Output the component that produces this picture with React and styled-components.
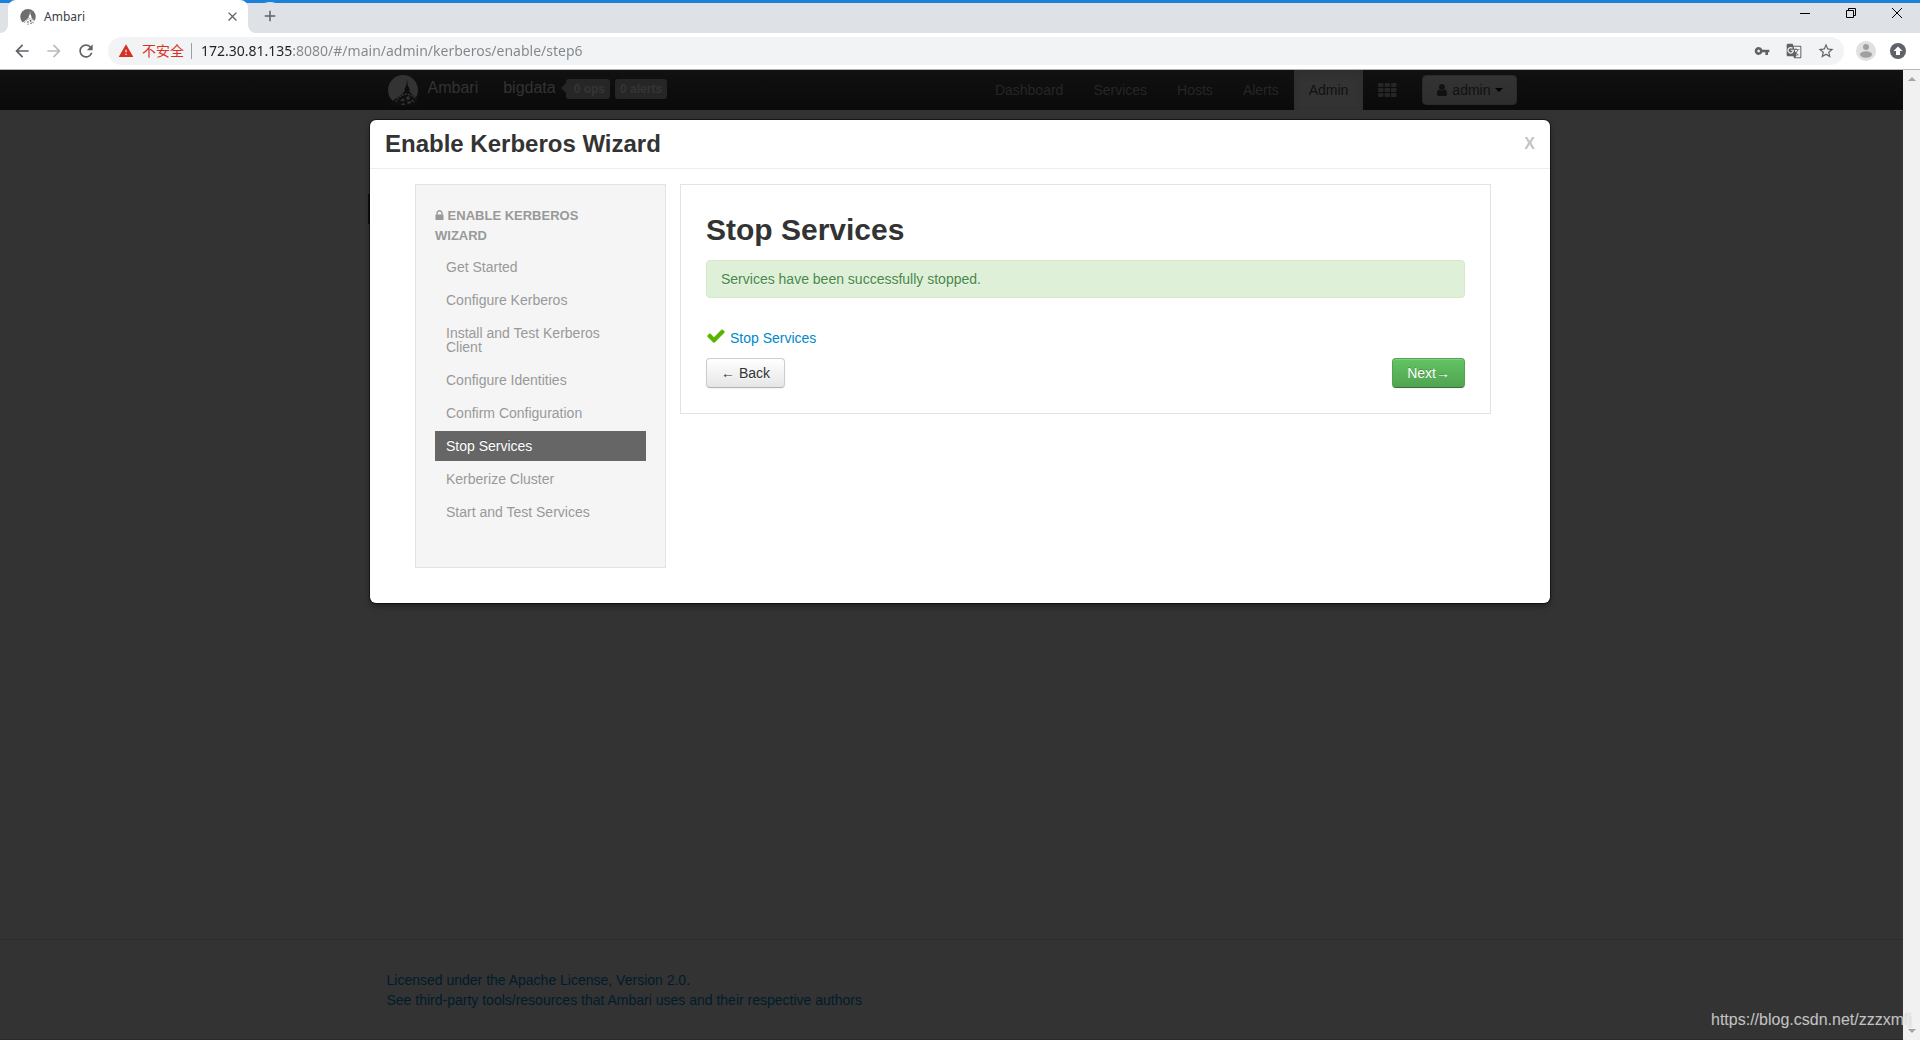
import React from 'react';
import styled, { createGlobalStyle, css } from 'styled-components';
import {
  MdAdd,
  MdArrowBack,
  MdArrowForward,
  MdClose,
  MdGTranslate,
  MdRefresh,
  MdStarBorder,
  MdVpnKey,
  MdWarning,
} from 'react-icons/md';

const GlobalStyle = createGlobalStyle`
  * {
    box-sizing: border-box;
  }

  body {
    margin: 0;
    font: 14px/20px "Liberation Sans", Arial, sans-serif;
    color: #333;
    background: #333;
  }

  button, input {
    font: inherit;
  }

  a {
    text-decoration: none;
  }

  svg {
    display: block;
    flex: none;
  }
`;

const chromeFont = '"Noto Sans", "Noto Sans CJK SC", sans-serif';

const Window = styled.div`
  position: relative;
  display: flex;
  flex-direction: column;
  min-height: 100vh;
  overflow: hidden;
`;

/* ---- browser frame ---- */

const TabStrip = styled.div`
  display: flex;
  height: 33px;
  background: #fff;
  font-family: ${chromeFont};
`;

const StripStart = styled.div`
  width: 8px;
  background: #dee1e6;
  border-top: 3px solid #1a82d9;
  border-bottom-right-radius: 8px;
`;

const StripRest = styled.div`
  display: flex;
  flex: 1;
  justify-content: space-between;
  align-items: flex-start;
  padding-left: 8px;
  background: #dee1e6;
  border-top: 3px solid #1a82d9;
  border-bottom-left-radius: 8px;
`;

const TabSlot = styled.div`
  width: 240px;
  background: linear-gradient(#1a82d9 3px, #dee1e6 3px, #dee1e6 16px, #fff 16px);
`;

const Tab = styled.div`
  display: flex;
  align-items: center;
  gap: 8px;
  height: 100%;
  padding: 0 8px 0 12px;
  background: #fff;
  border-radius: 8px 8px 0 0;
  font-size: 12px;
  color: #3c4043;
`;

const TabTitle = styled.span`
  flex: 1;
`;

const IconButton = styled.button`
  display: flex;
  align-items: center;
  justify-content: center;
  flex: none;
  width: ${({ $size }) => $size || 20}px;
  height: ${({ $size }) => $size || 20}px;
  padding: 0;
  border: 0;
  border-radius: 50%;
  background: ${({ $bg }) => $bg || 'none'};
  color: ${({ $color }) => $color || '#5f6368'};
`;

const NewTab = styled(IconButton)`
  margin-top: -1px;
`;

const WindowControls = styled.div`
  display: flex;
`;

const WindowButton = styled.button`
  display: flex;
  align-items: center;
  justify-content: center;
  width: 46px;
  height: 20px;
  padding: 0;
  border: 0;
  background: none;
  color: #000;
`;

const Toolbar = styled.div`
  display: flex;
  align-items: center;
  gap: 12px;
  height: 37px;
  padding: 0 12px;
  background: #fff;
  border-bottom: 1px solid #b5b4b6;
  font-family: ${chromeFont};
`;

const Omnibox = styled.div`
  display: flex;
  flex: 1;
  align-items: center;
  height: 28px;
  padding: 0 10px;
  border-radius: 14px;
  background: #f1f3f4;
`;

const Insecure = styled.span`
  display: flex;
  align-items: center;
  gap: 8px;
  padding-right: 7px;
  color: #d93025;
`;

const Separator = styled.span`
  width: 1px;
  height: 16px;
  margin-right: 9px;
  background: #9aa0a6;
`;

const Address = styled.input`
  flex: 1;
  min-width: 0;
  height: 20px;
  padding: 0;
  border: 0;
  outline: 0;
  color: transparent;
  background: linear-gradient(90deg, #202124 92px, #80868b 92px);
  background-clip: text;
`;

const OmniboxActions = styled.div`
  display: flex;
  gap: 16px;
`;

/* ---- page ---- */

const Viewport = styled.div`
  position: relative;
  display: flex;
  flex: 1;
`;

const Page = styled.div`
  display: flex;
  flex: 1;
  flex-direction: column;
  background: #333;
`;

const Scrollbar = styled.div`
  display: flex;
  flex-direction: column;
  justify-content: space-between;
  align-items: center;
  width: 17px;
  padding: 7px 0;
  background: #f1f1f1;
`;

const Container = styled.div`
  width: 100%;
  max-width: 1130px;
  margin: 0 auto;
`;

const Navbar = styled.header`
  background: linear-gradient(#111, #0a0a0a);
`;

const NavRow = styled(Container)`
  display: flex;
  align-items: center;
  height: 40px;
`;

const Brand = styled.a`
  display: flex;
  align-items: center;
  gap: 9px;
  margin-right: 25px;
  font-size: 16px;
  color: #333;
`;

const BrandText = styled.span`
  height: 24px;
`;

const ClusterName = styled.a`
  height: 24px;
  font-size: 16px;
  color: #333;
`;

const Label = styled.span`
  position: relative;
  margin-left: 5px;
  padding: 0 5px;
  margin-bottom: 2px;
  border-radius: 3px;
  background: #262626;
  font-size: 12px;
  font-weight: bold;
  color: #353535;

  ${({ $arrow }) => $arrow && css`
    margin-left: 10px;
    padding-left: 8px;

    &::before {
      content: "";
      position: absolute;
      left: -5px;
      top: 4px;
      border: 5px solid transparent;
      border-left: 0;
      border-right-color: #262626;
    }
  `}
`;

const NavLinks = styled.nav`
  display: flex;
  align-items: center;
  height: 100%;
  margin-left: auto;
`;

const NavLink = styled.a`
  display: flex;
  align-items: center;
  height: 100%;
  padding: 0 15px;
  color: #262626;

  ${({ $active }) => $active && css`
    background: #333;
    box-shadow: inset 0 3px 8px rgba(0, 0, 0, .12);
    color: #111;
  `}
`;

const UserButton = styled.button`
  display: flex;
  align-items: center;
  gap: 4px;
  height: 30px;
  margin-left: 10px;
  padding: 0 13px;
  border: 1px solid #2a2a2a;
  border-radius: 4px;
  background: linear-gradient(#333, #2e2e2e);
  color: #111;
`;

const Caret = styled.span`
  border: 4px solid transparent;
  border-top-color: #000;
  border-bottom: 0;
`;

const PageMain = styled(Container)`
  flex: 1;
  padding-top: 84px;
`;

const AdminMenuItem = styled.div`
  width: 160px;
  height: 30px;
  margin-left: -19px;
  background: #111;
`;

const Footer = styled.footer`
  padding: 30px 0 29px;
  border-top: 1px solid #2d2d2d;
  border-bottom: 1px solid #2a2a2a;
  color: #0a0a0a;
`;

const FooterLink = styled.a`
  color: #001c2b;
`;

/* ---- wizard ---- */

const Overlay = styled.div`
  position: absolute;
  inset: 0;
  display: flex;
  align-items: flex-start;
  justify-content: center;
  padding-top: 50px;
`;

const Modal = styled.section`
  width: 100%;
  max-width: 1180px;
  border-radius: 6px;
  background: #fff;
  box-shadow: 0 0 0 1px rgba(0, 0, 0, .5), 0 3px 7px rgba(0, 0, 0, .4);
`;

const ModalHeader = styled.header`
  display: flex;
  align-items: center;
  justify-content: space-between;
  height: 49px;
  padding: 0 15px;
  border-bottom: 1px solid #eee;
`;

const ModalTitle = styled.h3`
  margin: 0;
  font-size: 24px;
  line-height: 30px;
`;

const Close = styled.button`
  padding: 0;
  border: 0;
  background: none;
  font-size: 16px;
  font-weight: bold;
  line-height: 20px;
  color: #c4c4c4;
`;

const ModalBody = styled.div`
  display: flex;
  align-items: flex-start;
  gap: 14px;
  padding: 15px 59px 35px 45px;
`;

const Steps = styled.aside`
  flex: none;
  width: 251px;
  padding: 21px 19px 40px;
  border: 1px solid #e3e3e3;
  background: #f5f5f5;
  color: #999;
`;

const StepsTitle = styled.h4`
  margin: 0 0 6px;
  padding-right: 15px;
  font-size: 13px;
  line-height: 20px;
  text-transform: uppercase;

  svg {
    display: inline-block;
    vertical-align: -1px;
  }
`;

const StepList = styled.ul`
  display: flex;
  flex-direction: column;
  gap: 3px;
  margin: 0;
  padding: 0;
  list-style: none;
`;

const Step = styled.a`
  display: block;
  padding: 8px 11px;
  line-height: 14px;
  color: #999;

  ${({ $active }) => $active && css`
    background: #666;
    color: #fff;
    text-shadow: 0 -1px 0 rgba(0, 0, 0, .2);
  `}
`;

const StepPanel = styled.div`
  flex: 1;
  padding: 25px;
  border: 1px solid #e3e3e3;
`;

const PanelTitle = styled.h2`
  margin: 0 0 10px;
  font-size: 30px;
  line-height: 40px;
`;

const Alert = styled.div`
  margin-bottom: 30px;
  padding: 8px 14px;
  border: 1px solid #d6e9c6;
  border-radius: 4px;
  background: #dff0d8;
  color: #468847;
  text-shadow: 0 1px 0 rgba(255, 255, 255, .5);
`;

const Task = styled.div`
  display: flex;
  align-items: center;
  gap: 4px;
  margin-bottom: 10px;
`;

const TaskLink = styled.a`
  color: #08c;
`;

const PanelActions = styled.div`
  display: flex;
  justify-content: space-between;
`;

const Button = styled.button`
  height: 30px;
  padding: 0 14px;
  border: 1px solid #ccc;
  border-bottom-color: #b3b3b3;
  border-radius: 4px;
  background: linear-gradient(#fff, #e6e6e6);
  box-shadow: inset 0 1px 0 rgba(255, 255, 255, .2), 0 1px 2px rgba(0, 0, 0, .05);
  line-height: 20px;
  color: #333;
  text-shadow: 0 1px 1px rgba(255, 255, 255, .75);

  ${({ $success }) => $success && css`
    border-color: #51a351 #51a351 #387038;
    background: linear-gradient(#62c462, #51a351);
    color: #fff;
    text-shadow: 0 -1px 0 rgba(0, 0, 0, .25);
  `}
`;

const Arrow = styled.span`
  font-family: "Liberation Serif", serif;
`;

const Watermark = styled.div`
  position: absolute;
  right: 8px;
  bottom: 10px;
  font-size: 16px;
  color: rgba(255, 255, 255, .66);
  text-shadow: 0 0 1px rgba(120, 120, 120, .5);
`;

/* ---- icons ---- */

const AmbariLogo = ({ width, height, fill, ink }) => (
  <svg width={width} height={height} viewBox="0 0 30 31">
    <circle cx="15" cy="15" r="15" fill={fill} />
    <path
      d="M19 3.5l.6 6 .5 1.500 1.400 3v2.500l2 2.500L30 24v7H2v-3l6-4.500L14 19l2.500-2.500V14l1.400-3 .600-1.500z"
      fill={ink}
    />
    <path d="M8 27q3-7 11-8 5 1 9 5" fill="none" stroke={fill} strokeWidth="1.500" strokeDasharray="2 1" />
    <path d="M12 26l3-3 2 3zM18 22l3-1 1 3-3 1zM24 24l2 2-3 1zM19 27l3-1 1 2-3 1zM13 29l3-1 1 2h-3zM25 27l2-1-1 2z" fill={fill} />
  </svg>
);

const FontIcon = ({ width, height, d }) => (
  <svg width={width} height={height} viewBox="256 128 1280 1536" fill="currentColor">
    <path d={d} />
  </svg>
);

const lockPath = 'M640 768h512v-192q0-106-75-181t-181-75-181 75-75 181v192zm832 96v576q0 40-28 68t-68 28h-960q-40 0-68-28t-28-68v-576q0-40 28-68t68-28h32v-192q0-184 132-316t316-132 316 132 132 316v192h32q40 0 68 28t28 68z';
const userPath = 'M1536 1399q0 109-62.500 187t-150.500 78h-854q-88 0-150.500-78t-62.500-187q0-85 8.500-160.500t31.500-152 58.500-131 94-89 134.500-34.500q131 128 313 128t313-128q76 0 134.500 34.500t94 89 58.500 131 31.500 152 8.500 160.500zm-256-887q0 159-112.500 271.500t-271.500 112.500-271.500-112.500-112.500-271.500 112.500-271.500 271.500-112.500 271.500 112.500 112.500 271.500z';
const checkPath = 'M1671 566q0 40-28 68l-724 724-136 136q-28 28-68 28t-68-28l-136-136-362-362q-28-28-28-68t28-68l136-136q28-28 68-28t68 28l294 295 656-657q28-28 68-28t68 28l136 136q28 28 28 68z';

const CheckIcon = () => (
  <svg width="20" height="20" viewBox="100 200 1592 1792" fill="#5ab400">
    <path d={checkPath} />
  </svg>
);

const GridIcon = () => (
  <svg width="19" height="14" viewBox="0 0 19 14" fill="currentColor">
    {[0, 5, 10].map(y => [0, 6.5, 13].map(x => (
      <rect key={`${x}-${y}`} x={x} y={y} width="5.500" height="4" rx="1" />
    )))}
  </svg>
);

const AvatarIcon = () => (
  <svg width="20" height="20" viewBox="0 0 20 20">
    <circle cx="10" cy="10" r="10" fill="#dfe0e1" />
    <circle cx="10" cy="6" r="3" fill="#a0a0a0" />
    <ellipse cx="10" cy="13.500" rx="6" ry="3.200" fill="#a0a0a0" />
  </svg>
);

const UpdateIcon = () => (
  <svg width="16" height="16" viewBox="0 0 16 16">
    <circle cx="8" cy="8" r="8" fill="#5f6368" />
    <path d="M8 3.500L12.500 8H10v4H6V8H3.500z" fill="#fff" />
  </svg>
);

const ArrowTriangle = ({ down }) => (
  <svg width="8" height="4" viewBox="0 0 8 4" fill="#a3a3a3">
    <path d={down ? 'M0 0h8L4 4z' : 'M0 4h8L4 0z'} />
  </svg>
);

const links = ['Dashboard', 'Services', 'Hosts', 'Alerts', 'Admin'];

const steps = [
  'Get Started',
  'Configure Kerberos',
  'Install and Test Kerberos Client',
  'Configure Identities',
  'Confirm Configuration',
  'Stop Services',
  'Kerberize Cluster',
  'Start and Test Services',
];

const BrowserFrame = () => (
  <>
    <TabStrip>
      <StripStart />
      <TabSlot>
        <Tab>
          <AmbariLogo width="16" height="16" fill="#6e6e6e" ink="#fff" />
          <TabTitle>Ambari</TabTitle>
          <IconButton $size={16} aria-label="Close tab"><MdClose size={15} /></IconButton>
        </Tab>
      </TabSlot>
      <StripRest>
        <NewTab $size={28} $bg="#dee1e6" aria-label="New tab"><MdAdd size={18} /></NewTab>
        <WindowControls>
          <WindowButton aria-label="Minimize">
            <svg width="10" height="10" viewBox="0 0 10 10" shapeRendering="crispEdges">
              <path d="M0 5h10v1H0z" />
            </svg>
          </WindowButton>
          <WindowButton aria-label="Restore">
            <svg width="10" height="10" viewBox="0 0 10 10" fill="none" stroke="#000">
              <path d="M.5 2.500h7v7h-7zM2.500 2.500v-2h7v7h-2" />
            </svg>
          </WindowButton>
          <WindowButton aria-label="Close">
            <svg width="10" height="10" viewBox="0 0 10 10" stroke="#000">
              <path d="M0 0l10 10M10 0L0 10" />
            </svg>
          </WindowButton>
        </WindowControls>
      </StripRest>
    </TabStrip>
    <Toolbar>
      <IconButton aria-label="Back"><MdArrowBack size={20} /></IconButton>
      <IconButton $color="#babcbe" aria-label="Forward"><MdArrowForward size={20} /></IconButton>
      <IconButton aria-label="Reload"><MdRefresh size={20} /></IconButton>
      <Omnibox>
        <Insecure>
          <MdWarning size={16} />
          不安全
        </Insecure>
        <Separator />
        <Address aria-label="Address" defaultValue="172.30.81.135:8080/#/main/admin/kerberos/enable/step6" />
        <OmniboxActions>
          <IconButton $size={16} aria-label="Passwords"><MdVpnKey size={16} /></IconButton>
          <IconButton $size={16} aria-label="Translate"><MdGTranslate size={16} /></IconButton>
          <IconButton $size={16} aria-label="Bookmark"><MdStarBorder size={18} /></IconButton>
        </OmniboxActions>
      </Omnibox>
      <IconButton aria-label="Profile"><AvatarIcon /></IconButton>
      <IconButton aria-label="Update"><UpdateIcon /></IconButton>
    </Toolbar>
  </>
);

const Wizard = () => (
  <Modal>
    <ModalHeader>
      <ModalTitle>Enable Kerberos Wizard</ModalTitle>
      <Close>X</Close>
    </ModalHeader>
    <ModalBody>
      <Steps>
        <StepsTitle>
          <FontIcon width={9} height={11} d={lockPath} /> Enable Kerberos Wizard
        </StepsTitle>
        <StepList>
          {steps.map(step => (
            <li key={step}>
              <Step href="#" $active={step === 'Stop Services'}>{step}</Step>
            </li>
          ))}
        </StepList>
      </Steps>
      <StepPanel>
        <PanelTitle>Stop Services</PanelTitle>
        <Alert>Services have been successfully stopped.</Alert>
        <Task>
          <CheckIcon />
          <TaskLink href="#">Stop Services</TaskLink>
        </Task>
        <PanelActions>
          <Button><Arrow>←</Arrow> Back</Button>
          <Button $success>Next<Arrow>→</Arrow></Button>
        </PanelActions>
      </StepPanel>
    </ModalBody>
  </Modal>
);

const App = () => (
  <Window>
    <GlobalStyle />
    <BrowserFrame />
    <Viewport>
      <Page>
        <Navbar>
          <NavRow>
            <Brand href="#">
              <AmbariLogo width="32" height="31" fill="#333" ink="#0e0e0e" />
              <BrandText>Ambari</BrandText>
            </Brand>
            <ClusterName href="#">bigdata</ClusterName>
            <Label $arrow>0 ops</Label>
            <Label>0 alerts</Label>
            <NavLinks>
              {links.map(link => (
                <NavLink key={link} href="#" $active={link === 'Admin'}>{link}</NavLink>
              ))}
              <NavLink href="#" aria-label="Views"><GridIcon /></NavLink>
              <UserButton>
                <FontIcon width={12} height={12} d={userPath} />
                admin
                <Caret />
              </UserButton>
            </NavLinks>
          </NavRow>
        </Navbar>
        <PageMain>
          <AdminMenuItem />
        </PageMain>
        <Footer>
          <Container>
            <FooterLink href="#">Licensed under the Apache License, Version 2.0</FooterLink>.
            <br />
            <FooterLink href="#">See third-party tools/resources that Ambari uses and their respective authors</FooterLink>
          </Container>
        </Footer>
      </Page>
      <Scrollbar>
        <ArrowTriangle />
        <ArrowTriangle down />
      </Scrollbar>
      <Overlay>
        <Wizard />
      </Overlay>
    </Viewport>
    <Watermark>https://blog.csdn.net/zzzxmfj</Watermark>
  </Window>
);

export default App;
